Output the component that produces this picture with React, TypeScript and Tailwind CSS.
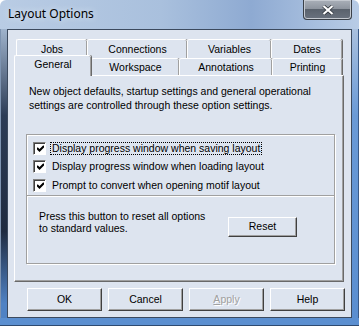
import React from "react";

const face = "bg-[#dde4ef]";

function Tab({ label, w, selected }: { label: string; w: number; selected?: boolean }) {
  return (
    <div
      style={{ width: w }}
      className={
        selected
          ? `relative z-10 -mt-[3px] h-[21px] ${face} border-l border-t border-white rounded-t-[2px] shadow-[inset_-1px_0_0_#a0a0a0,1px_0_0_#696969] flex items-center justify-center pb-[4px]`
          : `h-full ${face} border-l border-t border-white rounded-t-[2px] shadow-[inset_-1px_0_0_#a0a0a0,1px_0_0_#696969] flex items-center justify-center`
      }
    >
      <span className="leading-none">{label}</span>
    </div>
  );
}

function Check({ label, focus }: { label: string; focus?: boolean }) {
  return (
    <div className="flex items-center h-[18px]">
      <div className="w-[13px] h-[13px] bg-white border-t border-l border-[#808080] border-r border-b border-r-white border-b-white shadow-[inset_1px_1px_0_#404040] flex items-center justify-center">
        <svg width="7" height="7" viewBox="0 0 7 7" className="ml-[1px] mt-[1px]">
          <path d="M0 3 L2.5 5.5 L7 1" stroke="#000" strokeWidth="2" fill="none" />
        </svg>
      </div>
      <span
        className={
          "ml-[4px] px-[1px] leading-[11px] " +
          (focus ? "border border-dotted border-black" : "border border-transparent")
        }
      >
        {label}
      </span>
    </div>
  );
}

function Btn({ children, w, h, disabled }: { children: React.ReactNode; w: number; h: number; disabled?: boolean }) {
  return (
    <div
      style={{ width: w, height: h }}
      className={`${face} border-t border-l border-white border-r border-b border-r-[#404040] border-b-[#404040] shadow-[inset_-1px_-1px_0_#a0a0a0] flex items-center justify-center ${
        disabled ? "text-[#a0a0a0] [text-shadow:1px_1px_0_#fff]" : "text-black"
      }`}
    >
      {children}
    </div>
  );
}

export default function App() {
  return (
    <div
      className="w-[359px] h-[326px] flex flex-col overflow-hidden rounded-t-[6px] bg-[linear-gradient(90deg,#b9cce4_0%,#a9c0dd_45%,#8eaad2_70%,#b8cce6_100%)] text-[10.5px] text-black"
      style={{ fontFamily: '"Liberation Sans", Arial, sans-serif' }}
    >
      {/* Title bar */}
      <div className="h-[29px] flex items-start shrink-0">
        <span
          className="ml-[8px] mt-[6px] text-[12px] leading-[16px] text-black [text-shadow:0_0_6px_#e8f0fa]"
          style={{ fontFamily: '"Noto Sans", sans-serif' }}
        >
          Layout Options
        </span>
        <div className="ml-auto mr-[7px] w-[49px] h-[20px] rounded-b-[4px] border border-t-0 border-[#3a4048] bg-[linear-gradient(180deg,#aab0b9_0%,#8e959f_45%,#5a626d_50%,#6a727e_100%)] shadow-[inset_0_0_0_1px_#c4c9d0] flex items-center justify-center">
          <svg width="12" height="10" viewBox="0 0 12 10">
            <path d="M1.5 1 L10.5 9 M10.5 1 L1.5 9" stroke="#2a2f36" strokeWidth="3.6" />
            <path d="M1.5 1 L10.5 9 M10.5 1 L1.5 9" stroke="#fff" strokeWidth="2.2" />
          </svg>
        </div>
      </div>

      <div className="flex flex-1">
        {/* Left frame */}
        <div className="w-[7px] bg-[linear-gradient(180deg,#9fb3cc_0%,#2c3c56_30%,#1f2b40_70%,#4f82c4_95%)] shadow-[inset_1px_0_0_#7d93b0]" />

        {/* Client */}
        <div className={`w-[345px] h-[289px] ${face} border border-[#3c4a5e] flex flex-col`}>
          {/* Tab rows */}
          <div className="mt-[9px] h-[19px] flex ml-[8px]">
            <Tab label="Jobs" w={71} />
            <Tab label="Connections" w={100} />
            <Tab label="Variables" w={84} />
            <Tab label="Dates" w={71} />
          </div>
          <div className="h-[17px] flex ml-[6px]">
            <Tab label="General" w={77} selected />
            <Tab label="Workspace" w={88} />
            <Tab label="Annotations" w={93} />
            <Tab label="Printing" w={70} />
          </div>

          {/* Panel */}
          <div className="ml-[6px] w-[330px] h-[207px] border-l border-t border-white border-r border-b border-r-[#696969] border-b-[#696969] shadow-[inset_-1px_-1px_0_#a0a0a0] flex flex-col">
            <div className="ml-[14px] mt-[8px] leading-[14px]">
              <div>New object defaults, startup settings and general operational</div>
              <div>settings are controlled through these option settings.</div>
            </div>

            <div className="ml-[11px] mt-[22px] w-[309px] h-[130px] border border-[#a0a0a0] shadow-[inset_1px_1px_0_#fff,1px_1px_0_#fff] flex flex-col">
              <div className="h-[60px] pl-[6px] pt-[4px] flex flex-col">
                <Check label="Display progress window when saving layout" focus />
                <Check label="Display progress window when loading layout" />
                <div className="mt-[1px]">
                  <Check label="Prompt to convert when opening motif layout" />
                </div>
              </div>
              <div className="h-[1px] bg-[#a0a0a0] shadow-[0_1px_0_#fff]" />
              <div className="flex pl-[12px] pt-[14px]">
                <div className="w-[189px] leading-[12px]">
                  <div>Press this button to reset all options</div>
                  <div>to standard values.</div>
                </div>
                <div className="mt-[7px]">
                  <Btn w={69} h={20}>Reset</Btn>
                </div>
              </div>
            </div>
          </div>

          {/* Buttons */}
          <div className="mt-[6px] ml-[19px] flex gap-[6px]">
            <Btn w={75} h={23}>OK</Btn>
            <Btn w={75} h={23}>Cancel</Btn>
            <Btn w={75} h={23} disabled>
              <span><span className="underline">A</span>pply</span>
            </Btn>
            <Btn w={75} h={23}>Help</Btn>
          </div>
        </div>

        {/* Right frame */}
        <div className="w-[7px] bg-[linear-gradient(180deg,#a9c0de_0%,#6a9ad6_30%,#5a8ed0_100%)] shadow-[inset_-1px_0_0_#3a5a88]" />
      </div>
      {/* Bottom frame */}
      <div className="h-[8px] shrink-0 bg-[#5b8fd0] shadow-[inset_0_-1px_0_#2e4a70]" />
    </div>
  );
}
